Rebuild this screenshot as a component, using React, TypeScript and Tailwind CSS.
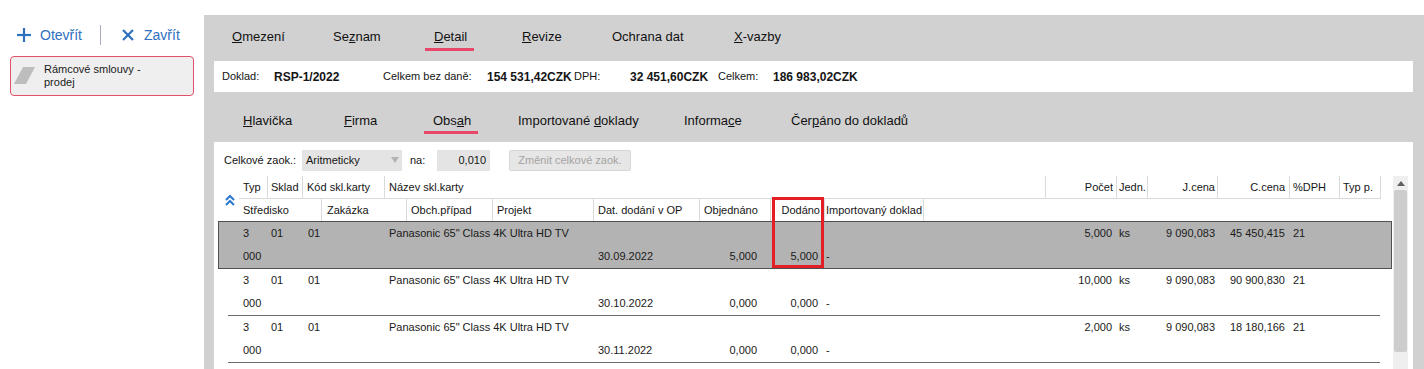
import React from "react";

const PINK = "bg-[#e8476a]";

function Chevrons() {
  return (
    <svg width="12" height="12" viewBox="0 0 12 12" fill="none" stroke="#2b78cf" strokeWidth="2">
      <polyline points="2,6 6,2 10,6" />
      <polyline points="2,11 6,7 10,11" />
    </svg>
  );
}

interface Row {
  pocet: string;
  jcena: string;
  ccena: string;
  date: string;
  obj: string;
  dod: string;
  sel?: boolean;
}

const ROWS: Row[] = [
  { pocet: "5,000", jcena: "9 090,083", ccena: "45 450,415", date: "30.09.2022", obj: "5,000", dod: "5,000", sel: true },
  { pocet: "10,000", jcena: "9 090,083", ccena: "90 900,830", date: "30.10.2022", obj: "0,000", dod: "0,000" },
  { pocet: "2,000", jcena: "9 090,083", ccena: "18 180,166", date: "30.11.2022", obj: "0,000", dod: "0,000" },
];

function DataRow({ r }: { r: Row }) {
  const wrap = r.sel
    ? "border border-[#505050] bg-[#b3b3b3] pl-[20px]"
    : "ml-[10px] mr-[12px] pl-[11px] border-b border-[#6b6b6b]";
  return (
    <div className={`${wrap} text-[#1a1a1a]`}>
      <div className="flex h-[23px] items-center whitespace-nowrap">
        <div className="w-[29px] pl-[4px]">3</div>
        <div className="w-[35px] pl-[3px]">01</div>
        <div className="w-[82px] pl-[5px]">01</div>
        <div className="w-[661px] pl-[4px]">Panasonic 65" Class 4K Ultra HD TV</div>
        <div className="w-[71px] pr-[5px] text-right">{r.pocet}</div>
        <div className="w-[31px] pl-[2px]">ks</div>
        <div className="w-[70px] pr-[3px] text-right">{r.jcena}</div>
        <div className="w-[72px] pr-[5px] text-right">{r.ccena}</div>
        <div className="w-[50px] pl-[3px]">21</div>
      </div>
      <div className="flex h-[23px] items-center whitespace-nowrap">
        <div className="w-[83px] pl-[4px]">000</div>
        <div className="w-[85px]" />
        <div className="w-[86px]" />
        <div className="w-[101px]" />
        <div className="w-[106px] pl-[4px]">{r.date}</div>
        <div className="w-[71px] pr-[14px] text-right">{r.obj}</div>
        <div className="w-[54px] pr-[7px] text-right">{r.dod}</div>
        <div className="w-[99px] pl-[1px]">-</div>
      </div>
    </div>
  );
}

export default function App() {
  const h1 = "h-full flex items-center border-r border-[#dadada]";
  return (
    <div className="flex w-[1424px] h-[369px] overflow-hidden bg-white font-['Liberation_Sans',Arial,sans-serif] text-[#151515]">
      {/* ── Left panel ── */}
      <aside className="w-[204px] shrink-0">
        <div className="mt-[25px] flex h-[20px] items-center text-[14px] text-[#2f6fc0]">
          <svg className="ml-[17px]" width="14" height="14" viewBox="0 0 14 14" stroke="#2f6fc0" strokeWidth="2.2">
            <line x1="7" y1="0" x2="7" y2="14" />
            <line x1="0" y1="7" x2="14" y2="7" />
          </svg>
          <span className="ml-[9px]">Otevřít</span>
          <div className="ml-[18px] h-[20px] w-px bg-[#a9abc4]" />
          <svg className="ml-[21px]" width="12" height="12" viewBox="0 0 12 12" stroke="#2f6fc0" strokeWidth="2.2">
            <line x1="1" y1="1" x2="11" y2="11" />
            <line x1="11" y1="1" x2="1" y2="11" />
          </svg>
          <span className="ml-[10px]">Zavřít</span>
        </div>
        <div className="ml-[10px] mt-[11px] flex h-[40px] w-[184px] items-center rounded-[4px] border border-[#e0516b] bg-[#efefef]">
          <svg className="ml-[3px]" width="21" height="18" viewBox="0 0 21 18">
            <polygon points="9,0 21,0 12,17 0,17" fill="#bdbdbd" />
          </svg>
          <div className="ml-[9px] text-[11px] leading-[13px] text-[#1a1a1a]">
            Rámcové smlouvy -<br />prodej
          </div>
        </div>
      </aside>

      {/* ── Main gray panel ── */}
      <main className="mt-[15px] flex flex-1 flex-col bg-[#d1d1d1] pl-[10px] pr-[11px]">
        {/* top tabs */}
        <div className="flex h-[46px] items-start pl-[18px] pt-[14px] text-[13px] leading-[16px] text-[#111]">
          <div className="w-[101px]"><span className="underline">O</span>mezení</div>
          <div className="w-[101px]">Se<span className="underline">z</span>nam</div>
          <div className="flex w-[88px] flex-col items-start">
            <span><span className="underline">D</span>etail</span>
            <div className={`-ml-[9px] mt-[3px] h-[3px] w-[49px] ${PINK}`} />
          </div>
          <div className="w-[90px]"><span className="underline">R</span>evize</div>
          <div className="w-[122px]">Ochrana dat</div>
          <div><span className="underline">X</span>-vazby</div>
        </div>

        {/* document summary */}
        <div className="flex h-[31px] items-center bg-white pl-[8px] text-[11px] whitespace-nowrap">
          <div className="w-[52px]">Doklad:</div>
          <div className="w-[109px] text-[12px] font-bold">RSP-1/2022</div>
          <div className="w-[104px]">Celkem bez daně:</div>
          <div className="w-[87px] text-[12px] font-bold">154 531,42CZK</div>
          <div className="w-[56px]">DPH:</div>
          <div className="w-[88px] text-[12px] font-bold">32 451,60CZK</div>
          <div className="w-[55px]">Celkem:</div>
          <div className="text-[12px] font-bold">186 983,02CZK</div>
        </div>

        {/* sub tabs */}
        <div className="flex h-[50px] items-start pl-[29px] pt-[21px] text-[13px] leading-[16px] text-[#111]">
          <div className="w-[101px]"><span className="underline">H</span>lavička</div>
          <div className="w-[89px]"><span className="underline">F</span>irma</div>
          <div className="flex w-[85px] flex-col items-start">
            <span>Obs<span className="underline">a</span>h</span>
            <div className={`-ml-[9px] mt-[2px] h-[3px] w-[54px] ${PINK}`} />
          </div>
          <div className="w-[166px]">Importované <span className="underline">d</span>oklady</div>
          <div className="w-[107px]">Informa<span className="underline">c</span>e</div>
          <div>Čer<span className="underline">p</span>áno do dokladů</div>
        </div>

        {/* content */}
        <div className="flex flex-1 flex-col bg-white text-[11px]">
          <div className="mt-[8px] flex h-[21px] items-center pl-[10px]">
            <div className="w-[78px]">Celkové zaok.:</div>
            <div className="flex h-[21px] w-[100px] items-start justify-between bg-[#e4e4e4] pl-[4px] pr-[3px] pt-[2px]">
              <span>Aritmeticky</span>
              <svg className="mt-[5px]" width="8" height="6" viewBox="0 0 8 6">
                <polygon points="0,0 8,0 4,6" fill="#b3b3b3" />
              </svg>
            </div>
            <div className="ml-[8px] w-[27px]">na:</div>
            <div className="flex h-[21px] w-[53px] items-center justify-end bg-[#e4e4e4] pr-[4px]">0,010</div>
            <div className="ml-[19px] flex h-[21px] w-[122px] items-center justify-center rounded-[2px] border border-[#d6d6d6] bg-[#e6e6e6] text-[#a3a3a3]">
              Změnit celkové zaok.
            </div>
          </div>

          <div className="mt-[5px] flex flex-1">
            {/* table */}
            <div className="relative ml-[4px] w-[1174px]">
              <div className="flex">
                <div className="flex w-[21px] items-center justify-center pl-[3px] pt-[2px]">
                  <Chevrons />
                </div>
                <div>
                  <div className="flex h-[23px] border-b border-[#dadada] whitespace-nowrap">
                    <div className={`${h1} w-[29px] pl-[4px]`}>Typ</div>
                    <div className={`${h1} w-[35px] pl-[3px]`}>Sklad</div>
                    <div className={`${h1} w-[82px] pl-[4px]`}>Kód skl.karty</div>
                    <div className={`${h1} w-[661px] pl-[4px]`}>Název skl.karty</div>
                    <div className={`${h1} w-[71px] justify-end pr-[3px]`}>Počet</div>
                    <div className={`${h1} w-[31px] pl-[2px]`}>Jedn.</div>
                    <div className={`${h1} w-[70px] justify-end pr-[2px]`}>J.cena</div>
                    <div className={`${h1} w-[72px] justify-end pr-[4px]`}>C.cena</div>
                    <div className={`${h1} w-[50px] pl-[3px]`}>%DPH</div>
                    <div className={`${h1} w-[41px] pl-[3px]`}>Typ p.</div>
                  </div>
                  <div className="flex h-[22px] whitespace-nowrap">
                    <div className={`${h1} w-[83px] pl-[4px]`}>Středisko</div>
                    <div className={`${h1} w-[85px] pl-[5px]`}>Zakázka</div>
                    <div className={`${h1} w-[86px] pl-[4px]`}>Obch.případ</div>
                    <div className={`${h1} w-[101px] pl-[4px]`}>Projekt</div>
                    <div className={`${h1} w-[106px] pl-[4px]`}>Dat. dodání v OP</div>
                    <div className={`${h1} w-[71px] pl-[4px]`}>Objednáno</div>
                    <div className={`${h1} w-[54px] justify-end pr-[4px]`}>Dodáno</div>
                    <div className={`${h1} w-[99px] pl-[1px]`}>Importovaný doklad</div>
                  </div>
                </div>
              </div>
              {ROWS.map((r, i) => (
                <DataRow key={i} r={r} />
              ))}
              {/* red annotation box */}
              <div className="absolute left-[554px] top-[21px] h-[71px] w-[52px] border-[3px] border-[#e41e25]" />
            </div>

            {/* scrollbar */}
            <div className="ml-[1px] flex w-[15px] flex-col bg-[#efefef]">
              <div className="flex h-[14px] items-center justify-center">
                <svg width="8" height="5" viewBox="0 0 8 5">
                  <polygon points="4,0 8,5 0,5" fill="#606060" />
                </svg>
              </div>
              <div className="mx-[1px] h-[162px] rounded-[2px] bg-[#cdcdcd]" />
            </div>
          </div>
        </div>
      </main>
    </div>
  );
}
